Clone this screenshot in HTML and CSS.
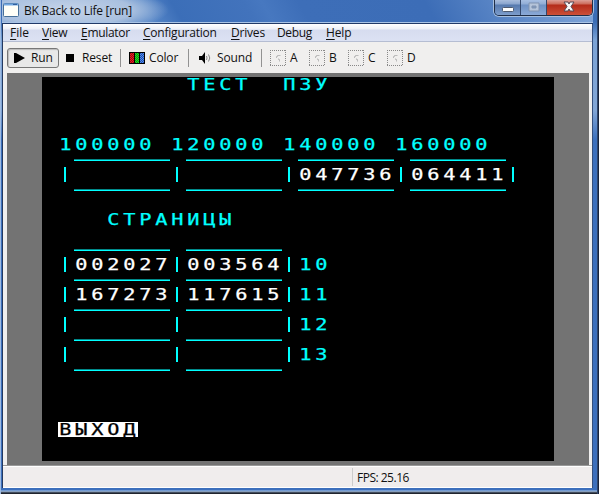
FILE: index.html
```html
<!DOCTYPE html>
<html lang="ru">
<head>
<meta charset="utf-8">
<title>BK Back to Life</title>
<link rel="stylesheet" href="styles.css">
</head>
<body>
<div class="window">
  <header class="titlebar">
    <svg class="app-icon" width="16" height="14" viewBox="0 0 16 14"><rect x=".5" y=".5" width="15" height="13" rx="1" fill="#fffff8" stroke="#477099"/><path d="M1 1.5h14" stroke="#71a7e2" stroke-width="2"/><path d="M10 1.5h4" stroke="#3060a0"/></svg>
    <span class="title">BK Back to Life [run]</span>
    <div class="controls">
      <span class="control minimize"><svg width="12" height="5"><rect x=".5" y=".5" width="11" height="4" rx="1" fill="#fff" stroke="#4f5b70"/></svg></span>
      <span class="control maximize"><svg width="12" height="10"><path d="M1 1h10v8H1z" fill="#b5c4da" stroke="#8193b0"/><path d="M4 4h4v2H4z" fill="#7f98be" stroke="#8193b0"/></svg></span>
      <span class="control close"><svg width="12" height="11" viewBox="0 0 12 11"><path d="M1 1h4l1 2 1-2h4L8 5.5 11 10H7L6 8l-1 2H1l3-4.5z" fill="#f7f7f8" stroke="#574954"/></svg></span>
    </div>
  </header>
  <main class="client">
    <nav class="menu">
      <span class="file"><u>F</u>ile</span><span class="view"><u>V</u>iew</span><span class="emulator"><u>E</u>mulator</span><span class="configuration"><u>C</u>onfiguration</span><span class="drives"><u>D</u>rives</span><span class="debug">Debug</span><span class="help"><u>H</u>elp</span>
    </nav>
    <div class="toolbar">
      <span class="tool run"><svg width="11" height="10"><path d="M0 0h2l9 5-9 5H0z"/></svg>Run</span>
      <span class="tool reset"><svg width="8" height="8"><path d="M0 0h8v8H0z"/></svg>Reset</span>
      <span class="tool color"><svg width="16" height="12" viewBox="0 0 16 12">
        <defs><pattern id="dots" width="2" height="2" patternUnits="userSpaceOnUse"><path d="M0 0h1v1H0zM1 1h1v1H1z" fill="#000" opacity=".4"/></pattern></defs>
        <path d="M0 0h16v12H0z"/><path d="M1 1h4v10H1z" fill="#f01820"/><path d="M6 1h4v10H6z" fill="#19e51e"/><path d="M11 1h4v10h-4z" fill="#4789ff"/><path d="M1 1h14v10H1z" fill="url(#dots)"/></svg>Color</span>
      <span class="tool sound"><svg width="12" height="12" viewBox="0 0 12 12"><path d="M0 4h3l3-4v12L3 8H0z"/><path d="M7.5 4q1 2 0 4M9.5 2.5q2.5 3.5 0 7" fill="none" stroke="#888"/></svg>Sound</span>
      <div class="drive-tools">
        <span class="drive"><svg viewBox="0 0 16 16"><path d="M0 .5h16M0 15.5h16M.5 0v16M15.5 0v16"/><path class="mark" d="M6.5 8V6.5h1v-1h3M8.5 8.5v1h1v2"/></svg>A</span>
        <span class="drive"><svg viewBox="0 0 16 16"><path d="M0 .5h16M0 15.5h16M.5 0v16M15.5 0v16"/><path class="mark" d="M6.5 8V6.5h1v-1h3M8.5 8.5v1h1v2"/></svg>B</span>
        <span class="drive"><svg viewBox="0 0 16 16"><path d="M0 .5h16M0 15.5h16M.5 0v16M15.5 0v16"/><path class="mark" d="M6.5 8V6.5h1v-1h3M8.5 8.5v1h1v2"/></svg>C</span>
        <span class="drive"><svg viewBox="0 0 16 16"><path d="M0 .5h16M0 15.5h16M.5 0v16M15.5 0v16"/><path class="mark" d="M6.5 8V6.5h1v-1h3M8.5 8.5v1h1v2"/></svg>D</span>
      </div>
    </div>
    <section class="stage">
      <div class="screen">
        <div class="heading rom"><span class="glyphs">ТЕСТ  ПЗУ</span></div>
        <div class="addresses"><span class="glyphs">100000 120000 140000 160000</span></div>
        <div class="rules"><i></i><i></i><i></i><i></i></div>
        <div class="values"><b></b><b></b><b><span class="glyphs">047736</span></b><b><span class="glyphs">064411</span></b><b class="end"></b></div>
        <div class="rules"><i></i><i></i><i></i><i></i></div>
        <div class="heading pages"><span class="glyphs">СТРАНИЦЫ</span></div>
        <div class="rules"><i></i><i></i></div>
        <div class="values"><b><span class="glyphs">002027</span></b><b><span class="glyphs">003564</span></b><b class="number"><span class="glyphs">10</span></b></div>
        <div class="rules"><i></i><i></i></div>
        <div class="values"><b><span class="glyphs">167273</span></b><b><span class="glyphs">117615</span></b><b class="number"><span class="glyphs">11</span></b></div>
        <div class="rules"><i></i><i></i></div>
        <div class="values"><b></b><b></b><b class="number"><span class="glyphs">12</span></b></div>
        <div class="rules"><i></i><i></i></div>
        <div class="values"><b></b><b></b><b class="number"><span class="glyphs">13</span></b></div>
        <div class="rules"><i></i><i></i></div>
        <div class="exit"><span class="glyphs">ВЫХОД</span></div>
      </div>
    </section>
    <footer class="status"><span class="message"></span><span class="fps">FPS: 25.16</span></footer>
  </main>
</div>
</body>
</html>
```
FILE: styles.css
```css
* { box-sizing: border-box; }
body { margin: 0; overflow: hidden; font: 12px/16px "Open Sans", "Noto Sans", sans-serif; color: #111; }
svg { display: block; flex: none; }
.window {
  width: 599px; height: 494px; padding: 0 5px 6px 2px;
  border-right: 1px solid #18233b;
  background: linear-gradient(90deg, #a0bce2 0, #a0bce2 1px, transparent 1px, transparent 597px, #30466c 597px),
    linear-gradient(#3b6db6 0, #3b6db6 22px, #7ba3d6 40px, #82a6d6 110px, #3c70bd 140px, #3c6fbc 490px, #a9c6ea 491px, #20242e 493px);
}
.titlebar {
  display: flex; height: 24px; padding: 0 0 0 1px; border-bottom: 1px solid #213a68;
  background: linear-gradient(#fff0 22px, #a9c4e6 22px),
    radial-gradient(ellipse 105px 24px at 62px 10px, #c5d4e9 0, #a9c0df 65%, transparent 100%),
    linear-gradient(60deg, #6f97cf 0, #5787c8 25%, #3b6eb8 30%, #4273bc 42%, #4778c0 45%, #3d6eb8 51%, #3c6db7 72%, #82a7da 100%);
}
.app-icon { margin-top: 3px; }
.title { width: 113px; margin: 3px 0 0 5px; letter-spacing: -.25px; white-space: nowrap; }
.controls {
  display: flex; width: 99px; height: 16px; margin-left: 357px;
  border: 1px solid #202e48; border-top: 0; border-radius: 0 0 5px 5px; overflow: hidden;
  box-shadow: 0 0 0 1px #a6bedd;
}
.control { display: flex; justify-content: center; width: 27px; border-right: 1px solid #34476b; background: linear-gradient(#a9bddc 0, #8aa5ce 4px, #5679ae 5px, #7d9dcc); }
.maximize { width: 26px; background: linear-gradient(#a7bfe2 0, #91add6 4px, #6f91c4 5px, #8aa9d7); }
.close { width: 46px; border: 0; background: linear-gradient(#dda097 0, #cc6b5a 4px, #b42b19 5px, #cc5038); }
.minimize svg { margin-top: 7px; }
.maximize svg { margin-top: 2px; }
.close svg { margin-top: 1px; }
.client { height: 464px; border-left: 1px solid #253a60; border-right: 1px solid #344f7c; background: #f0efee; }
.menu { display: flex; height: 18px; padding: 0 0 0 7px; border-bottom: 1px solid #b5bdd2; background: linear-gradient(#fff 0, #edf0f8 5px, #d6dcef 6px, #dce2f3); }
.menu span { line-height: 18px; white-space: nowrap; }
.menu u { text-underline-offset: 2px; text-decoration-thickness: 1px; }
.file { width: 32px; }
.view { width: 39px; letter-spacing: -.2px; }
.emulator { width: 62px; letter-spacing: -.3px; }
.configuration { width: 88px; letter-spacing: -.22px; }
.drives { width: 46px; letter-spacing: -.2px; }
.debug { width: 49px; letter-spacing: -.35px; }
.help { letter-spacing: -.15px; }
.toolbar { display: flex; align-items: center; height: 31px; padding: 0 0 0 4px; }
.tool { display: flex; align-items: center; height: 20px; letter-spacing: -.15px; }
.run { width: 52px; gap: 6px; padding: 1px 0 0 6px; border: 1px solid #777; border-radius: 3px; background: #e8e8e8; box-shadow: inset 1px 1px 1px #bbb; }
.reset { width: 54px; gap: 8px; margin-left: 7px; }
.color, .sound, .drive-tools { border-left: 1px solid #929292; height: 18px; }
.color { width: 68px; gap: 4px; padding-left: 8px; }
.sound { width: 73px; gap: 6px; padding-left: 10px; }
.drive-tools { display: flex; align-items: center; padding-left: 8px; }
.drive { display: flex; align-items: center; width: 39px; gap: 4px; }
.drive svg { width: 16px; height: 16px; fill: none; stroke: #888; stroke-dasharray: 1 1; }
.drive .mark { stroke: #aaa; stroke-dasharray: none; opacity: .75; }
.stage { height: 392px; margin: 0 3px 0 4px; padding: 4px 35px 4px; background: #737373; }
.screen { width: 512px; height: 384px; overflow: hidden; background: #000; color: #0ff; font: 15px/15px "DejaVu Sans Mono", monospace; }
.screen > div { height: 15px; }
.glyphs { display: block; width: max-content; padding-left: 1px; transform: scaleX(1.35); transform-origin: 0 0; letter-spacing: 2.821px; white-space: pre; font-weight: 400; line-height: 16px; -webkit-text-stroke: .25px; }
.rom { padding-left: 144px; }
.screen .addresses { margin-top: 45px; padding-left: 16px; }
.rules { display: flex; gap: 16px; padding: 7px 0 0 32px; }
.rules i { width: 96px; height: 2px; background: linear-gradient(#008989 50%, #0ff 50%); }
.values { display: flex; padding-left: 22px; }
.values b { flex: none; width: 112px; padding-left: 8px; border-left: 2px solid #0ff; color: #fff; }
.values .end { width: 2px; padding: 0; }
.values .number { color: #0ff; }
.screen .pages { margin-top: 15px; padding-left: 64px; }
.screen .pages + .rules { margin-top: 15px; }
.screen .exit { width: 80px; margin: 45px 0 0 16px; background: #fff; color: #000; }
.status { display: flex; height: 23px; border-top: 1px solid #999; background: #f0eded; box-shadow: inset 0 1px #fff, inset 0 -1px #fff; }
.message { width: 349px; }
.fps { margin: 2px 0; padding-left: 4px; border-left: 1px solid #ccc; letter-spacing: -.5px; line-height: 19px; }
```
